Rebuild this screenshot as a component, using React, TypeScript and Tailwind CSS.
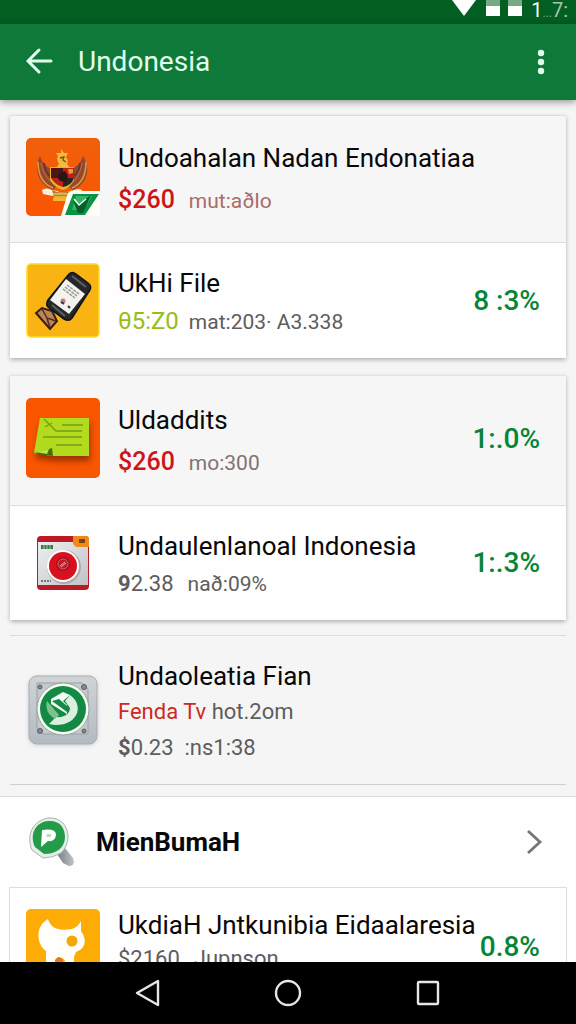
import type { ReactNode } from 'react';

function EmblemIcon() {
  return (
    <svg viewBox="0 0 74 78" className="h-[78px] w-[74px]" aria-hidden="true">
      <defs>
        <linearGradient id="emblemBg" x1="0" y1="0" x2="0" y2="1">
          <stop offset="0" stopColor="#f0600a" />
          <stop offset="1" stopColor="#fb5504" />
        </linearGradient>
      </defs>
      <rect width="74" height="78" rx="5" fill="url(#emblemBg)" />
      <path d="M14 18C8 30 11 46 27 52L31 48L25 40L25 31C19 28 16 24 14 18Z" fill="#96482d" />
      <path d="M57 18C65 30 62 46 47 52L42 48L46 40L46 31C52 28 55 24 57 18Z" fill="#96482d" />
      <path d="M12 24C12 37 17 46 27 50M60 24C60 37 56 46 46 50" fill="none" stroke="#dd9a3d" strokeWidth="1.6" />
      <path d="M15 25C17 36 22 42 28 46M56 25C54 36 50 42 45 46" fill="none" stroke="#b96a3c" strokeWidth="1.2" />
      <path d="M18 25Q19 34 24 38M54 25Q53 34 48 38" fill="none" stroke="#6a3436" strokeWidth="2" />
      <path d="M35 11L38 15L42 15L40 19Q43 23 41 26L44 30H30L33 26Q30 21 32 18L30 15H35Z" fill="#efbc3d" />
      <path d="M34 20L38 19L37 22L40 24" fill="none" stroke="#8c431b" strokeWidth="1.3" />
      <path d="M24 29H48V42Q43 51 37 52Q29 50 24 42Z" fill="#e9b42c" />
      <path d="M25 30H37V40H25Z" fill="#4a1715" />
      <path d="M37 30H48V40H37Z" fill="#c91a18" />
      <path d="M25 40H37V49Q29 47 25 40Z" fill="#c22119" />
      <path d="M37 40H48Q45 48 37 49Z" fill="#292321" />
      <path d="M34 35L39 33L42 38L40 44L34 43L31 39Z" fill="#281615" />
      <path d="M42 31H47V35L43 36Z" fill="#dea12b" />
      <path d="M16 52Q20 49 26 52L31 53Q36 56 44 53L52 51Q57 51 56 55L46 58H27L17 56Z" fill="#f5eee2" />
      <path d="M26 52Q36 57 47 52L45 60H28Z" fill="#ba7a26" />
      <path d="M27 56H46M28 59H45" stroke="#e9c257" strokeWidth="1.5" />
      <path d="M27 60H44L40 63H27Z" fill="#f0b62e" />
      <path d="M45 53H74V78H35L41 58Q42 54 45 53Z" fill="#fffef6" />
      <path d="M47 56H73L59 77H39Z" fill="#079443" />
      <path d="M50 58H66L58 72H46Z" fill="#37b768" />
      <path d="M47 62L53 66L65 57L57 75H52Z" fill="#075e2b" />
      <path d="M48 61L53 67L60 61" fill="none" stroke="#f3fff4" strokeWidth="1.5" />
    </svg>
  );
}

function PhoneIcon() {
  return (
    <svg viewBox="0 0 74 75" className="h-[75px] w-[74px]" aria-hidden="true">
      <rect x="1" y="1" width="72" height="73" rx="4" fill="#f9b414" stroke="#ffda20" strokeWidth="1.5" />
      <path d="M16 45L10 50L24 66L31 58L26 48Z" fill="#b88658" stroke="#3b1c14" strokeWidth="2" />
      <path d="M16 46L21 55L30 58M21 55L24 65" fill="none" stroke="#56271a" strokeWidth="1.5" />
      <path d="M43 11Q46 8 50 11L62 20Q66 23 64 27L46 55Q43 59 38 56L23 45Q19 42 22 37Z" fill="#25282a" stroke="#111" strokeWidth="1.5" />
      <path d="M40 16L59 31L43 51L24 37Z" fill="#f4f3ef" />
      <path d="M46 13L60 24M26 42L39 53" stroke="#596067" strokeWidth="2" />
      <path d="M41 22L53 31M39 24L51 33M37 26L49 35" stroke="#9b9b99" strokeWidth="1.5" strokeDasharray="3 1" />
      <circle cx="37" cy="38" r="2.5" fill="#b7877f" />
      <path d="M35 39L38 41M42 43L44 45" stroke="#333" strokeWidth="2" />
    </svg>
  );
}

function NoteIcon() {
  return (
    <svg viewBox="0 0 74 80" className="h-20 w-[74px]" aria-hidden="true">
      <defs>
        <filter id="noteShadow" x="-20%" y="-20%" width="150%" height="160%">
          <feDropShadow dx="1" dy="5" stdDeviation="3" floodColor="#792300" floodOpacity=".75" />
        </filter>
      </defs>
      <rect width="74" height="80" rx="5" fill="#fa5600" />
      <path d="M14 20H63V58H26L8 55Z" fill="#b1db1c" filter="url(#noteShadow)" />
      <path d="M8 55Q16 54 26 50L27 58Q18 58 8 55Z" fill="#476d09" />
      <path d="M10 54Q18 53 23 51L21 56Z" fill="#c0e646" />
      <path d="M18 21L30 33H56M19 29L26 25M17 39H56M30 47H56M36 27H57" fill="none" stroke="#769d17" strokeWidth="1.3" />
    </svg>
  );
}

function WasherIcon() {
  return (
    <svg viewBox="0 0 54 56" className="h-14 w-[54px]" aria-hidden="true">
      <defs>
        <linearGradient id="washerBody" x1="0" y1="0" x2="1" y2="1">
          <stop offset="0" stopColor="#eeeeef" />
          <stop offset="1" stopColor="#bfc3c8" />
        </linearGradient>
      </defs>
      <rect x="1" y="1" width="52" height="54" rx="4" fill="#bd1826" />
      <path d="M2 7H52V50H2Z" fill="url(#washerBody)" />
      <path d="M37 1H50Q53 1 53 4V12H40L37 9Z" fill="#ee8a18" />
      <rect x="43" y="4" width="6" height="4" fill="#7a4016" />
      <rect x="5" y="10" width="12" height="4" fill="#367a49" />
      <path d="M8 10V14M11 10V14M14 10V14" stroke="#9fc9a7" />
      <circle cx="28" cy="32" r="17" fill="#b4a7a7" />
      <circle cx="27" cy="31" r="16" fill="#fff" />
      <circle cx="27" cy="31" r="14" fill="#d9101f" />
      <circle cx="27" cy="29" r="7" fill="#9d1520" />
      <circle cx="27" cy="29" r="5" fill="#c11a26" stroke="#df5a60" />
      <path d="M24 31L29 27M25 32L30 28" stroke="#e5b0ad" strokeWidth="1" />
      <path d="M5 46H15" stroke="#555" strokeWidth="1.5" strokeDasharray="2 1" />
    </svg>
  );
}

function SafeIcon() {
  return (
    <svg viewBox="0 0 70 70" className="h-[70px] w-[70px] drop-shadow-sm" aria-hidden="true">
      <defs>
        <linearGradient id="safeBody" x1="0" y1="0" x2="0" y2="1">
          <stop offset="0" stopColor="#d0d4d7" />
          <stop offset="1" stopColor="#b3bac1" />
        </linearGradient>
      </defs>
      <rect x="1" y="1" width="68" height="68" rx="8" fill="url(#safeBody)" stroke="#a5adb4" strokeWidth="1" />
      <path d="M9 8H54L60 14V59H15L9 53Z" fill="#c5c9cc" stroke="#9ba1a5" />
      <g fill="#838b90" stroke="#555c62">
        <circle cx="12" cy="12" r="2" />
        <circle cx="56" cy="12" r="2.5" />
        <circle cx="12" cy="56" r="2.5" />
        <circle cx="56" cy="56" r="2" />
      </g>
      <circle cx="35" cy="34" r="26" fill="#f3fbf3" stroke="#9aa49f" />
      <circle cx="35" cy="34" r="23" fill="#148944" />
      <path d="M23 24L35 17L42 20L35 26L39 30V39L23 29Z" fill="#f2faf3" />
      <path d="M42 20C51 26 52 37 46 43C40 50 30 51 21 49L28 42C37 43 42 38 42 33L37 26Z" fill="#dceee0" />
      <path d="M19 26L31 40L27 44C20 40 17 33 19 26Z" fill="#7bc291" />
      <path d="M24 26L39 37V31L31 24Z" fill="#148944" />
    </svg>
  );
}

function SearchBadge() {
  return (
    <svg viewBox="0 0 48 50" className="h-[50px] w-12 shrink-0" aria-hidden="true">
      <defs>
        <linearGradient id="searchHandle" x1="0" y1="0" x2="1" y2="0">
          <stop offset="0" stopColor="#777d83" />
          <stop offset="1" stopColor="#c0c4c8" />
        </linearGradient>
      </defs>
      <path d="M29 37L37 31L45 41Q48 49 41 49L35 46Z" fill="url(#searchHandle)" />
      <path d="M20 1C32 0 40 8 40 20Q40 29 33 36Q25 41 15 41L4 33C-2 19 4 4 20 1Z" fill="#e5eee7" stroke="#a9b5ad" />
      <path d="M20 4C31 3 37 10 37 20C37 31 28 37 16 37L7 30C1 17 8 5 20 4Z" fill="#239b49" />
      <path d="M14 13Q28 11 28 18Q27 25 20 24L13 30Z" fill="#fff" />
      <path d="M19 17H23V20H18Z" fill="#b5dfc0" />
    </svg>
  );
}

function CatIcon() {
  return (
    <svg viewBox="0 0 74 76" className="h-[76px] w-[74px]" aria-hidden="true">
      <rect width="74" height="76" rx="5" fill="#fcac04" />
      <path d="M22 10C25 20 33 22 46 20Q53 17 55 12L55 22C61 30 60 40 50 43L48 48V76H43L39 62V52Q37 48 33 49Q29 52 29 60L20 56V42C10 35 9 17 22 10Z" fill="#fffefa" />
      <circle cx="46" cy="32" r="5.5" fill="#f5a606" />
      <path d="M29 51Q33 45 37 51V76H29Z" fill="#ee7515" />
    </svg>
  );
}

type ListRowProps = {
  icon: ReactNode;
  title: string;
  percent?: string;
  className: string;
  children: ReactNode;
};

function ListRow({ icon, title, percent, className, children }: ListRowProps) {
  return (
    <article className={`flex gap-[18px] pl-4 pr-[26px] ${className}`}>
      <div className="flex w-[74px] shrink-0 justify-center">{icon}</div>
      <div className="min-w-0 flex-1">
        <h2 className="whitespace-nowrap text-[26px] leading-8">{title}</h2>
        {children}
      </div>
      {percent && <div className="self-center text-[28px] font-medium leading-8 text-[#078536]">{percent}</div>}
    </article>
  );
}

export default function App() {
  return (
    <div className="flex h-screen flex-col overflow-hidden bg-[#f5f5f5] font-[Roboto,sans-serif] text-[#080808]">
      <div className="flex h-6 shrink-0 items-start justify-end gap-2 bg-[#035e22] pr-2 text-white">
        <svg viewBox="0 0 72 24" className="h-6 w-[72px]" aria-hidden="true">
          <path d="M1 0H25L13 16Z" fill="#fff" />
          <rect x="35" y="0" width="14" height="16" fill="#fff" />
          <rect x="35" y="0" width="14" height="6" fill="#76a985" />
          <rect x="57" y="0" width="14" height="16" fill="#fff" />
          <rect x="57" y="0" width="14" height="6" fill="#76a985" />
        </svg>
        <span className="whitespace-nowrap text-xl leading-5">1<span className="text-xs text-[#75a682]">...</span><span className="text-[#a5c6ad]">7:</span></span>
      </div>
      <header className="relative flex h-[76px] shrink-0 items-center bg-[#0e7939] px-6 text-[#e1ffed] shadow-[0_2px_7px_rgba(0,0,0,0.4)]">
        <button type="button" aria-label="Back">
          <svg viewBox="0 0 30 30" className="h-[30px] w-[30px]" fill="none" stroke="currentColor" strokeWidth="3" strokeLinecap="round">
            <path d="M27 14H4M15 3L4 14L15 25" />
          </svg>
        </button>
        <h1 className="ml-6 flex-1 text-[28px] leading-8">Undonesia</h1>
        <button type="button" aria-label="More options">
          <svg viewBox="0 0 22 28" className="h-7 w-[22px]" fill="currentColor">
            <circle cx="11" cy="5" r="3.2" />
            <circle cx="11" cy="14" r="3.2" />
            <circle cx="11" cy="23" r="3.2" />
          </svg>
        </button>
      </header>

      <main className="min-h-0 flex-1 overflow-y-auto pt-[15px] [scrollbar-width:none]">
        <section className="mx-[10px] mb-[17px] rounded-b-xs border-t border-[#dedede] shadow-[0_2px_4px_rgba(0,0,0,0.28)]">
          <ListRow icon={<EmblemIcon />} title="Undoahalan Nadan Endonatiaa" className="bg-[#f6f6f6] pb-[25px] pt-[22px] [&_h2]:pt-1">
            <p className="mt-2.5 flex items-baseline gap-3.5 text-[21px] leading-8 text-[#aa6c69]">
              <span className="text-[25px] font-medium text-[#cc1518]">$260</span>
              <span>mut:aðlo</span>
            </p>
          </ListRow>
          <ListRow icon={<PhoneIcon />} title="UkHi File" percent="8 :3%" className="items-center border-t border-[#dddddd] bg-[#fefefe] py-5 [&_h2]:pt-1">
            <p className="mt-1.5 flex items-baseline gap-2.5 whitespace-nowrap text-[21px] leading-8 text-[#5d5d5d]">
              <span className="text-2xl text-[#98bd16]">θ5:Z0</span>
              <span>mat:203· A3.338</span>
            </p>
          </ListRow>
        </section>

        <section className="mx-[10px] mb-[15px] rounded-b-xs border-t border-[#e4e4e4] shadow-[0_2px_4px_rgba(0,0,0,0.28)]">
          <ListRow icon={<NoteIcon />} title="Uldaddits" percent="1:.0%" className="bg-[#f6f6f6] pb-[26px] pt-[22px] [&_h2]:pt-1.5">
            <p className="mt-2.5 flex items-baseline gap-3.5 text-[21px] leading-8 text-[#817372]">
              <span className="text-[25px] font-medium text-[#cc1518]">$260</span>
              <span>mo:300</span>
            </p>
          </ListRow>
          <ListRow icon={<WasherIcon />} title="Undaulenlanoal Indonesia" percent="1:.3%" className="items-center border-t border-[#dddddd] bg-[#fefefe] py-5 [&_h2]:pt-1">
            <p className="mt-1.5 flex items-baseline gap-3.5 text-[22px] leading-8 text-[#5d5d5d]">
              <span><b>9</b>2.38</span>
              <span className="text-[21px]">nað:09%</span>
            </p>
          </ListRow>
        </section>

        <section className="mx-[10px] mb-[11px] border-y border-t-[#dddddd] border-b-[#cfcfd2]">
          <ListRow icon={<SafeIcon />} title="Undaoleatia Fian" className="items-center pb-5 pt-5 [&_h2]:pt-1">
            <p className="mt-1 text-[22px] leading-8 text-[#5d5d5d]"><span className="text-[#cf281e]">Fenda Tv</span> hot.2om</p>
            <p className="mt-1 text-[22px] leading-8 text-[#5d5d5d]"><b>$</b>0.23 &nbsp;:ns1:38</p>
          </ListRow>
        </section>

        <section className="border-t border-[#dedede] bg-[#fefefe]">
          <button type="button" className="flex h-[90px] w-full items-center gap-5 pl-7 pr-8 text-left">
            <SearchBadge />
            <span className="flex-1 text-[26px] font-bold leading-8">MienBumaH</span>
            <svg viewBox="0 0 20 28" className="h-7 w-5" fill="none" stroke="#767676" strokeWidth="2.8" aria-hidden="true">
              <path d="M4 3L16 14L4 25" />
            </svg>
          </button>
          <div className="mx-[9px] border border-[#dddddd]">
            <ListRow icon={<CatIcon />} title="UkdiaH Jntkunibia Eidaalaresia" percent="0.8%" className="pb-5 pt-[21px]">
              <p className="mt-0.5 flex gap-3.5 text-[22px] leading-8 text-[#5d5d5d]">
                <span>$2160</span>
                <span>Jupnson</span>
              </p>
            </ListRow>
          </div>
        </section>
      </main>

      <nav className="flex h-[62px] shrink-0 items-center justify-center gap-[112px] bg-black text-[#e6e6e6]">
        <button type="button" aria-label="Back">
          <svg viewBox="0 0 28 28" className="h-7 w-7" fill="none" stroke="currentColor" strokeWidth="2.4" strokeLinejoin="round">
            <path d="M24 2V26L3 14Z" />
          </svg>
        </button>
        <button type="button" aria-label="Home">
          <svg viewBox="0 0 28 28" className="h-7 w-7" fill="none" stroke="currentColor" strokeWidth="2.4">
            <circle cx="14" cy="14" r="12" />
          </svg>
        </button>
        <button type="button" aria-label="Recent apps">
          <svg viewBox="0 0 28 28" className="h-7 w-7" fill="none" stroke="currentColor" strokeWidth="2.4">
            <rect x="4" y="3" width="20" height="22" rx="1" />
          </svg>
        </button>
      </nav>
    </div>
  );
}
